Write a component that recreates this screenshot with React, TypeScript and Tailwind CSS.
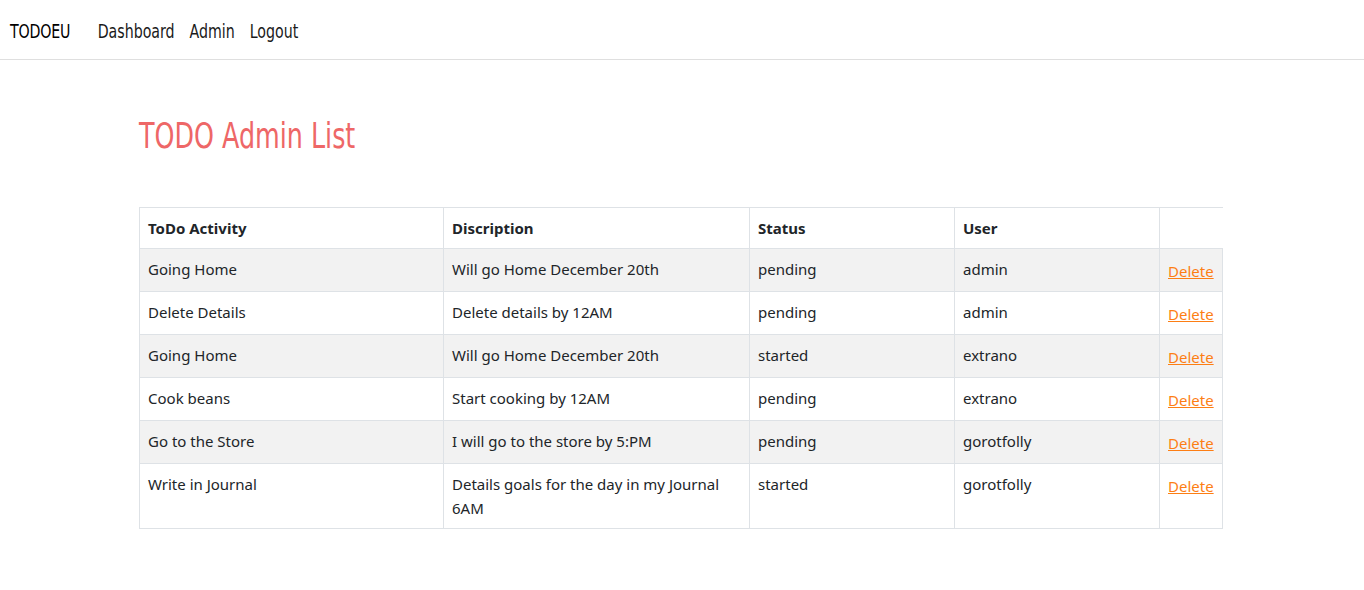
import React from "react";

const rows = [
  { a: "Going Home", d: "Will go Home December 20th", s: "pending", u: "admin" },
  { a: "Delete Details", d: "Delete details by 12AM", s: "pending", u: "admin" },
  { a: "Going Home", d: "Will go Home December 20th", s: "started", u: "extrano" },
  { a: "Cook beans", d: "Start cooking by 12AM", s: "pending", u: "extrano" },
  { a: "Go to the Store", d: "I will go to the store by 5:PM", s: "pending", u: "gorotfolly" },
  { a: "Write in Journal", d: "Details goals for the day in my Journal 6AM", s: "started", u: "gorotfolly" },
];

const narrow = { fontFamily: '"Liberation Sans Narrow", "DejaVu Sans Condensed", "Roboto", sans-serif' };

export default function App() {
  return (
    <div className="min-h-[590px] bg-white text-[#212529]" style={{ fontFamily: '"Noto Sans", "Open Sans", sans-serif' }}>
      <nav className="h-[60px] border-b border-[#dfdfdf] flex items-center px-[10px] pt-[4px]" style={narrow}>
        <div className="flex items-center scale-x-[0.83] origin-left whitespace-nowrap">
          <span className="text-[19px] text-black mr-[33px] tracking-[-0.2px]">TODOEU</span>
          <div className="flex gap-[18px] text-[19px] text-[#1a1a1a]">
            <span>Dashboard</span>
            <span>Admin</span>
            <span>Logout</span>
          </div>
        </div>
      </nav>
      <div className="pl-[139px] pr-[142px]">
        <h1 className="text-[35px] text-[#ee6767] mt-[56px] mb-[51px] leading-[40px] whitespace-nowrap" style={narrow}>
          <span className="inline-block scale-x-[0.806] origin-left">TODO Admin List</span>
        </h1>
        <table className="w-[1083px] border-collapse text-[15px] leading-[24px] table-fixed">
          <colgroup>
            <col className="w-[304px]" />
            <col className="w-[306px]" />
            <col className="w-[205px]" />
            <col className="w-[205px]" />
            <col className="w-[63px]" />
          </colgroup>
          <thead>
            <tr className="h-[41px]">
              <th className="text-left font-bold border border-[#dee2e6] px-[8px] align-middle">ToDo Activity</th>
              <th className="text-left font-bold border border-[#dee2e6] px-[8px] align-middle">Discription</th>
              <th className="text-left font-bold border border-[#dee2e6] px-[8px] align-middle">Status</th>
              <th className="text-left font-bold border border-[#dee2e6] px-[8px] align-middle">User</th>
              <th className="border-t border-l border-b border-[#dee2e6]"></th>
            </tr>
          </thead>
          <tbody>
            {rows.map((r, i) => (
              <tr key={i} className={i % 2 === 0 ? "bg-[#f2f2f2]" : "bg-white"}>
                <td className="border border-[#dee2e6] px-[8px] py-[8px] align-top">{r.a}</td>
                <td className="border border-[#dee2e6] px-[8px] py-[8px] align-top">{r.d}</td>
                <td className="border border-[#dee2e6] px-[8px] py-[8px] align-top">{r.s}</td>
                <td className="border border-[#dee2e6] px-[8px] py-[8px] align-top">{r.u}</td>
                <td className="border border-[#dee2e6] px-[8px] pt-[10px] pb-[8px] align-top">
                  <a className="text-[#fd7e14] underline cursor-pointer">Delete</a>
                </td>
              </tr>
            ))}
          </tbody>
        </table>
      </div>
    </div>
  );
}
